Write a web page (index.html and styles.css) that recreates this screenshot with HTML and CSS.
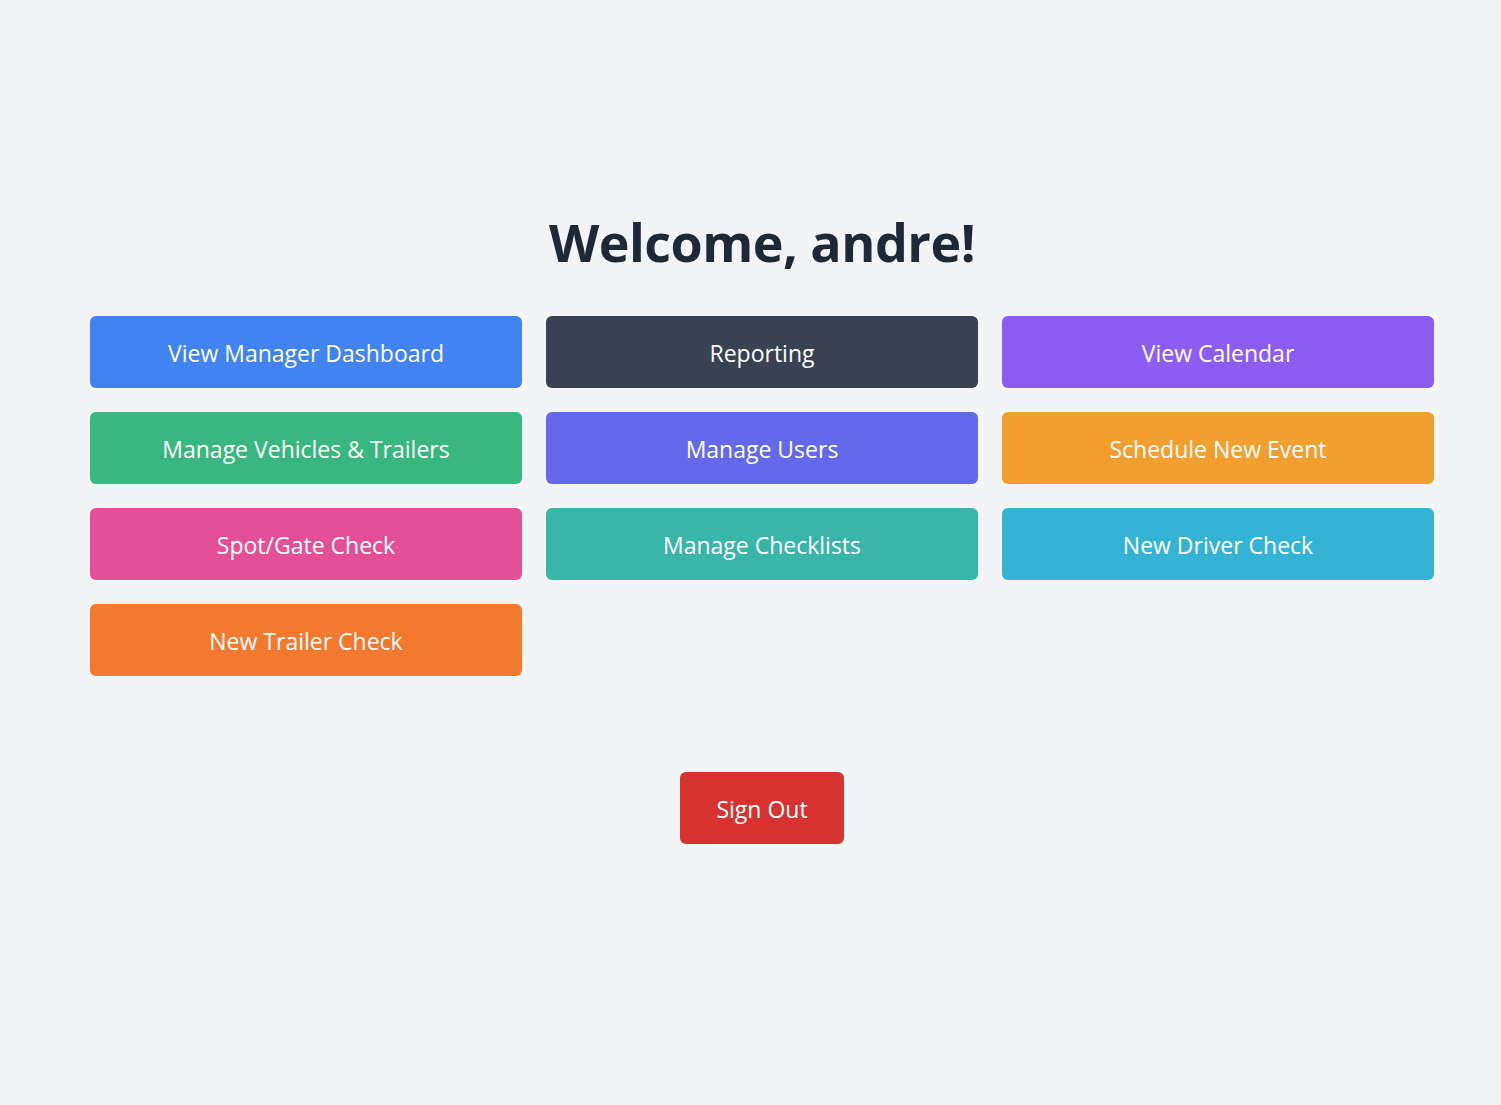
FILE: index.html
```html
<!DOCTYPE html>
<html lang="en">
<head>
<meta charset="utf-8">
<title>Welcome</title>
<link rel="stylesheet" href="styles.css">
</head>
<body>
<main class="page">
  <h1 class="title">Welcome, andre!</h1>
  <div class="grid">
    <a class="btn blue">View Manager Dashboard</a>
    <a class="btn slate">Reporting</a>
    <a class="btn purple">View Calendar</a>
    <a class="btn green">Manage Vehicles &amp; Trailers</a>
    <a class="btn indigo">Manage Users</a>
    <a class="btn amber">Schedule New Event</a>
    <a class="btn pink">Spot/Gate Check</a>
    <a class="btn teal">Manage Checklists</a>
    <a class="btn cyan">New Driver Check</a>
    <a class="btn orange">New Trailer Check</a>
  </div>
  <div class="actions">
    <a class="btn red signout">Sign Out</a>
  </div>
</main>
</body>
</html>
```
FILE: styles.css
```css
html, body {
  margin: 0;
  padding: 0;
  background: #f3f4f6;
}
body {
  font-family: "Open Sans", "Noto Sans", sans-serif;
}
.page {
  padding: 206px 67px 0 90px;
  display: flex;
  flex-direction: column;
  align-items: center;
}
.title {
  margin: 0 0 38px;
  font-size: 52px;
  line-height: 72px;
  font-weight: 700;
  color: #1e2938;
  letter-spacing: -0.5px;
}
.grid {
  width: 100%;
  display: grid;
  grid-template-columns: repeat(3, 1fr);
  gap: 24px;
}
.btn {
  height: 72px;
  padding-top: 2px;
  display: flex;
  align-items: center;
  justify-content: center;
  border-radius: 6px;
  color: #ffffff;
  font-size: 23px;
  text-decoration: none;
  box-sizing: border-box;
}
.actions {
  margin-top: 96px;
  display: flex;
  justify-content: center;
}
.signout {
  width: 164px;
}
.blue { background: #4283f2; }
.slate { background: #384250; }
.purple { background: #8b5df2; }
.green { background: #38b880; }
.indigo { background: #6568eb; }
.amber { background: #f1a02f; }
.pink { background: #e54f96; }
.teal { background: #38b6a7; }
.cyan { background: #34b4d4; }
.orange { background: #f3792f; }
.red { background: #d7322f; }
```
